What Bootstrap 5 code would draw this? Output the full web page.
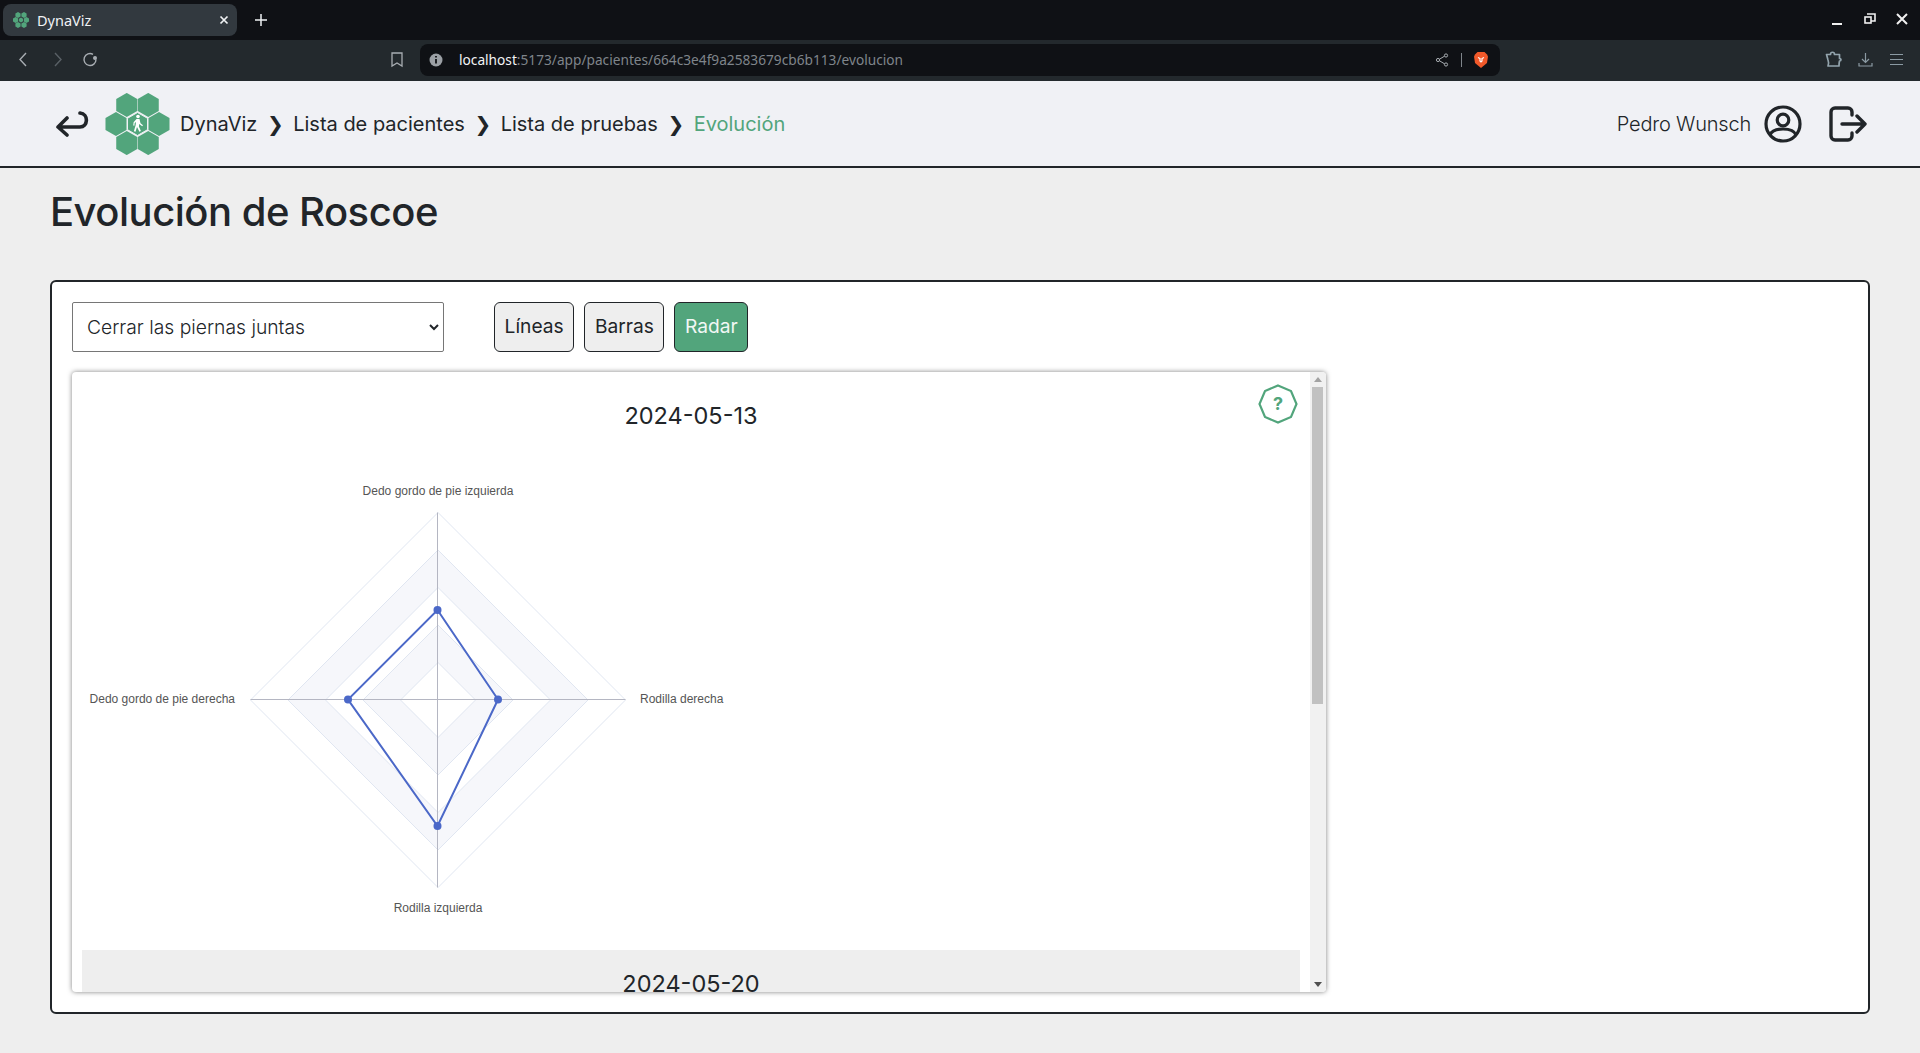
<!DOCTYPE html>
<html lang="es">
<head>
<meta charset="UTF-8">
<meta name="viewport" content="width=device-width, initial-scale=1">
<title>DynaViz</title>
<link href="https://cdn.jsdelivr.net/npm/bootstrap@5.3.3/dist/css/bootstrap.min.css" rel="stylesheet">
<style>
  html, body { height: 100%; overflow: hidden; }
  body { background: #eeeeee; color: #212529; font-family: Inter, "Liberation Sans", sans-serif; }

  /* browser chrome */
  .tabstrip { height: 40px; background: #0f1115; color: #fff; }
  .tabpill { width: 234px; height: 32px; margin: 4px 0 0 3px; background: #32393f; border-radius: 8px; font: 14.500px "Noto Sans", sans-serif; color: #f0f2f4; padding: 0 8px 0 10px; }
  .tabplus { margin: 14px 0 0 18px; }
  .toolbar { height: 41px; background: #23292d; }
  .urlbar { position: relative; width: 1080px; height: 32px; margin: 0 0 2px 420px; background: #0f1115; border-radius: 8px; font: 13.700px "Noto Sans", sans-serif; color: #7f858b; padding: 0 12px 0 9px; }
  .urlhost { color: #f3f4f5; }
  .urlpath { flex-grow: 1; }
  .urlsep { width: 1px; height: 14px; margin: 0 12px; background: #7f858b; }
  .tb-right { position: absolute; right: 16px; top: -1px; height: 41px; }
  .wincontrols { position: absolute; right: 10px; top: 11px; }
  .tb-icon { position: absolute; top: 11px; }

  /* app navbar */
  .appbar { height: 87px; background: #f0f1f5; border-bottom: 2px solid #212529; padding: 0 53px 0 56px; font-size: 20px; }
  .crumb-sep { font-family: "DejaVu Sans", sans-serif; font-size: 20px; margin: 0 9.500px; }
  .crumb-now { color: #52a57c; }
  .username { font-weight: 300; margin-right: 13px; letter-spacing: -.2px; }

  /* page */
  .page-title { font-size: 40px; font-weight: 500; line-height: 48px; margin: 20px 0 44px 50px; letter-spacing: -.5px; }
  .panel { margin: 0 50px; height: 734px; background: #fff; border: 2px solid #212529; border-radius: 6px; padding: 20px; }
  .exercise-select { width: 372px; height: 50px; font-size: 19.300px; font-weight: 300; color: #212529; border: 1px solid #767676; border-radius: 2px; padding: 0 24px 0 14px; background-image: url("data:image/svg+xml,%3Csvg xmlns='http://www.w3.org/2000/svg' width='10' height='7'%3E%3Cpath d='M1 1l4 4 4-4' fill='none' stroke='%23212529' stroke-width='2'/%3E%3C/svg%3E"); background-position: right 4px center; background-size: 10px 7px; }
  .chart-btn { height: 50px; padding: 0 9.600px; font-size: 19.200px; line-height: 1; background: #eeeeee; color: #212529; border: 1px solid #212529; border-radius: 6px; }
  .chart-btn.on { background: #52a57c; color: #f1f7f4; }
  .btn-group-gap { margin-left: 50px; gap: 10px; }

  .chart-card { position: relative; width: 1254px; height: 620px; margin-top: 20px; background: #fff; border-radius: 4px; box-shadow: 0 0 5px rgba(0,0,0,.5); overflow: hidden; }
  .chart-scroll { height: 100%; overflow: hidden; padding: 10px 26px 10px 10px; }
  .chart-row { height: 568px; }
  .chart-row.alt { background: #eeeeee; }
  .chart-date { font-size: 23.500px; font-weight: 400; line-height: 33px; padding-top: 17px; margin: 0; text-align: center; }
  .radar-label { font: 12px "Liberation Sans", sans-serif; fill: #555555; }
  .help-badge { position: absolute; left: 1186px; top: 12px; width: 40px; height: 40px; }

  /* the vertical scrollbar of the chart list */
  .fake-scroll { position: absolute; right: 0; top: 0; bottom: 0; width: 16px; background: #f1f1f1; }
  .fake-thumb { position: absolute; left: 2px; right: 3px; top: 15px; height: 317px; background: #c1c1c1; }
  .fake-up, .fake-down { position: absolute; left: 3.500px; width: 0; height: 0; border-left: 4px solid transparent; border-right: 4px solid transparent; }
  .fake-up { top: 5px; border-bottom: 5px solid #a3a3a3; }
  .fake-down { bottom: 5px; border-top: 5px solid #505050; }
</style>
</head>

<body>

<svg width="0" height="0" class="position-absolute">
  <symbol id="hexmark" viewBox="0 0 24 24">
    <path d="M12 2l8.700 5v10L12 22l-8.700-5V7z"/>
  </symbol>
</svg>

<!-- browser window -->
<div class="tabstrip d-flex align-items-start position-relative">
  <div class="tabpill d-flex align-items-center">
    <svg width="16" height="16" viewBox="0 0 16 16" fill="#52a57c" class="me-2">
      <path d="M5 0l2.600 1.500v3L5 6 2.400 4.500v-3zM11 0l2.600 1.500v3L11 6 8.400 4.500v-3zM2.600 5l2.600 1.500v3L2.600 11 0 9.500v-3zM13.400 5L16 6.500v3L13.400 11l-2.600-1.500v-3zM5 10l2.600 1.500v3L5 16l-2.600-1.500v-3zM11 10l2.600 1.500v3L11 16l-2.600-1.500v-3zM8 5.500l2 1.200v2.600l-2 1.200-2-1.200V6.700z"/>
    </svg>
    <span class="flex-grow-1">DynaViz</span>
    <svg width="10" height="10" viewBox="0 0 10 10" stroke="#f0f2f4" stroke-width="1.700"><path d="M1.500 1.500l7 7M8.500 1.500l-7 7"/></svg>
  </div>
  <svg class="tabplus" width="12" height="12" viewBox="0 0 12 12" stroke="#f0f2f4" stroke-width="1.500"><path d="M6 0v12M0 6h12"/></svg>
  <div class="wincontrols d-flex align-items-center gap-3">
    <svg width="16" height="16" viewBox="0 0 16 16" fill="#f0f0f0"><rect x="2" y="12" width="10" height="2"/></svg>
    <svg width="16" height="16" viewBox="0 0 16 16" fill="none" stroke="#f0f0f0" stroke-width="1.600"><path d="M5 3h8v7H9"/><rect x="3" y="6" width="6" height="6"/></svg>
    <svg width="16" height="16" viewBox="0 0 16 16" stroke="#f0f0f0" stroke-width="2"><path d="M3 3l10 10M13 3L3 13"/></svg>
  </div>
</div>
<div class="toolbar d-flex align-items-center position-relative">
  <svg class="tb-icon" style="left:16px" width="16" height="17" viewBox="0 0 16 17" fill="none" stroke="#a8adb2" stroke-width="1.400"><path d="M10 2L4 8.500l6 6.500"/></svg>
  <svg class="tb-icon" style="left:49px" width="16" height="17" viewBox="0 0 16 17" fill="none" stroke="#596066" stroke-width="1.400"><path d="M6 2l6 6.500L6 15"/></svg>
  <svg class="tb-icon" style="left:82px" width="16" height="17" viewBox="0 0 16 17" fill="none" stroke="#a8adb2" stroke-width="1.400"><path d="M14 8.500a6 6 0 1 1-3-5.200"/><circle cx="13" cy="7" r="1.300" fill="#a8adb2"/></svg>
  <svg class="tb-icon" style="left:390px" width="14" height="17" viewBox="0 0 14 17" fill="none" stroke="#a8adb2" stroke-width="1.300"><path d="M2 2h10v13l-5-3-5 3z"/></svg>
  <div class="urlbar d-flex align-items-center">
    <svg class="me-2" width="14" height="14" viewBox="0 0 14 14"><circle cx="7" cy="7" r="6.500" fill="#9ba0a5"/><path d="M7 6v4.500M7 3v1.600" stroke="#0f1115" stroke-width="1.800"/></svg>
    <span class="ms-2 urlhost">localhost</span><span class="urlpath">:5173/app/pacientes/664c3e4f9a2583679cb6b113/evolucion</span>
    <svg width="14" height="14" viewBox="0 0 14 14" fill="none" stroke="#a8adb2"><circle cx="11" cy="2.500" r="1.600"/><circle cx="11" cy="11.500" r="1.600"/><circle cx="3" cy="7" r="1.600"/><path d="M4.500 6.200l5-3M4.500 7.800l5 3"/></svg>
    <span class="urlsep"></span>
    <svg width="14" height="17" viewBox="0 0 14 17"><path d="M3.500 1h7L13 3.500 14 5.500l-1 6.500-6 5-6-5L0 5.500 1 3.500z" fill="#f1592a"/><path d="M4 6.500l2 1v2.500l1 1 1-1V7.500l2-1" fill="none" stroke="#fff" stroke-width="1.200"/></svg>
  </div>
  <div class="tb-right d-flex align-items-center gap-3">
    <svg width="17" height="17" viewBox="0 0 17 17" fill="none" stroke="#93a4ad" stroke-width="1.700" stroke-linejoin="round"><path d="M1.500 3.500h4c0-3 4-3 4 0h5v4c2 0 2 2.500 0 2.500-.5 2-.5 3-.5 5H3c.8-2 .8-4 0-6z"/></svg>
    <svg width="15" height="15" viewBox="0 0 15 15" fill="none" stroke="#8b9aa3" stroke-width="1.200"><path d="M7.500 1v9M4 7l3.500 3.500L11 7M1 11v3h13v-3"/></svg>
    <svg width="15" height="15" viewBox="0 0 15 15" stroke="#8b9aa3" stroke-width="1.200"><path d="M1 2.500h13M1 7.500h13M1 12.500h13"/></svg>
  </div>
</div>

<!-- app -->
<nav class="appbar d-flex align-items-center">
  <svg width="34" height="28" viewBox="0 0 34 28" fill="none" stroke="#212529" stroke-width="3.600" stroke-linecap="round" stroke-linejoin="round" class="flex-shrink-0">
    <path d="M11 8L2 17l9 8M2 17h22c8 0 9-13 0-14"/>
  </svg>
  <svg width="67" height="62" viewBox="0 0 67 62" class="flex-shrink-0" style="margin-left:14px;margin-right:9px" fill="#52a57c">
    <use href="#hexmark" x="8.250" y="-2.500" width="29" height="29"/>
    <use href="#hexmark" x="29.750" y="-2.500" width="29" height="29"/>
    <use href="#hexmark" x="-2.500" y="16.500" width="29" height="29"/>
    <use href="#hexmark" x="40.500" y="16.500" width="29" height="29"/>
    <use href="#hexmark" x="8.250" y="35.500" width="29" height="29"/>
    <use href="#hexmark" x="29.750" y="35.500" width="29" height="29"/>
    <path d="M33.500 19.500l10 5.800v11.400l-10 5.800-10-5.800V25.300z" fill="#52a57c" stroke="#f0f1f5" stroke-width="1"/>
    <g fill="#fff">
      <circle cx="34" cy="23.500" r="1.800"/>
      <path d="M32.500 26h3l1 4.300 2.500 2-.8 1-3-2.200-.3 2.400 2 4.500-1.500.7-2.400-4.700-1.500 4.700-1.600-.5 1.800-6.300.3-3-1.300 1.200-.3 2.600-1.200-.2.400-3.300z"/>
    </g>
  </svg>
  <span>DynaViz</span>
  <span class="crumb-sep">❯</span>
  <span>Lista de pacientes</span>
  <span class="crumb-sep">❯</span>
  <span>Lista de pruebas</span>
  <span class="crumb-sep">❯</span>
  <span class="crumb-now">Evolución</span>

  <span class="username ms-auto">Pedro Wunsch</span>
  <svg width="38" height="38" viewBox="0 0 38 38" fill="none" stroke="#212529" stroke-width="3.200" class="flex-shrink-0">
    <circle cx="19" cy="19" r="17"/>
    <circle cx="19" cy="15" r="5.800"/>
    <path d="M6 30c3-8 23-8 26 0"/>
  </svg>
  <svg width="38" height="36" viewBox="0 0 38 36" fill="none" stroke="#212529" stroke-width="3.400" stroke-linecap="round" stroke-linejoin="round" class="flex-shrink-0" style="margin-left:27px">
    <path d="M23 9V6a4 4 0 0 0-4-4H6a4 4 0 0 0-4 4v24a4 4 0 0 0 4 4h13a4 4 0 0 0 4-4v-3"/>
    <path d="M13 18h23M28 10l8 8-8 8"/>
  </svg>
</nav>

<h1 class="page-title">Evolución de Roscoe</h1>

<main class="panel">
  <div class="d-flex">
    <select class="form-select exercise-select">
      <option>Cerrar las piernas juntas</option>
    </select>
    <div class="d-flex btn-group-gap">
      <button type="button" class="btn chart-btn">Líneas</button>
      <button type="button" class="btn chart-btn">Barras</button>
      <button type="button" class="btn chart-btn on">Radar</button>
    </div>
  </div>

  <div class="chart-card">
    <div class="chart-scroll">
      <div class="chart-row">
        <h2 class="chart-date">2024-05-13</h2>
        <svg class="d-block" width="700" height="518" viewBox="0 0 700 518">
          <path fill="#f6f7fb" fill-rule="evenodd" d="M356 118L506 268L356 418L206 268ZM356 155.500L468.500 268L356 380.500L243.500 268Z"/>
          <path fill="#f6f7fb" fill-rule="evenodd" d="M356 193L431 268L356 343L281 268ZM356 230.500L393.500 268L356 305.500L318.500 268Z"/>
          <g fill="none" stroke="#e0e6f1">
            <path d="M356 80.500L543.500 268L356 455.500L168.500 268Z"/>
            <path d="M356 118L506 268L356 418L206 268Z"/>
            <path d="M356 155.500L468.500 268L356 380.500L243.500 268Z"/>
            <path d="M356 193L431 268L356 343L281 268Z"/>
            <path d="M356 230.500L393.500 268L356 305.500L318.500 268Z"/>
          </g>
          <path d="M355.500 80.500V455.500M168.500 267.500H543.500" stroke="#b4b6c2" fill="none"/>
          <path d="M355.500 178L416 267.500L355.500 394L266 267.500Z" fill="none" stroke="#4b68c8" stroke-width="2"/>
          <g fill="#4b68c8">
            <circle cx="355.500" cy="178" r="4"/>
            <circle cx="416" cy="267.500" r="4"/>
            <circle cx="355.500" cy="394" r="4"/>
            <circle cx="266" cy="267.500" r="4"/>
          </g>
          <text class="radar-label" x="356" y="63" text-anchor="middle">Dedo gordo de pie izquierda</text>
          <text class="radar-label" x="153" y="271" text-anchor="end">Dedo gordo de pie derecha</text>
          <text class="radar-label" x="558" y="271">Rodilla derecha</text>
          <text class="radar-label" x="356" y="480" text-anchor="middle">Rodilla izquierda</text>
        </svg>
      </div>
      <div class="chart-row alt">
        <h2 class="chart-date">2024-05-20</h2>
      </div>
    </div>
    <div class="fake-scroll">
      <span class="fake-up"></span>
      <div class="fake-thumb"></div>
      <span class="fake-down"></span>
    </div>
    <svg class="help-badge" viewBox="0 0 40 40">
      <path d="M20 1.500L33 7l5.500 13L33 33l-13 5.500L7 33 1.500 20 7 7z" fill="#fff" stroke="#52a57c" stroke-width="2.200"/>
      <text x="20" y="26" text-anchor="middle" font-family="Inter, sans-serif" font-size="18" font-weight="700" fill="#52a57c">?</text>
    </svg>
  </div>
</main>

</body>
</html>
